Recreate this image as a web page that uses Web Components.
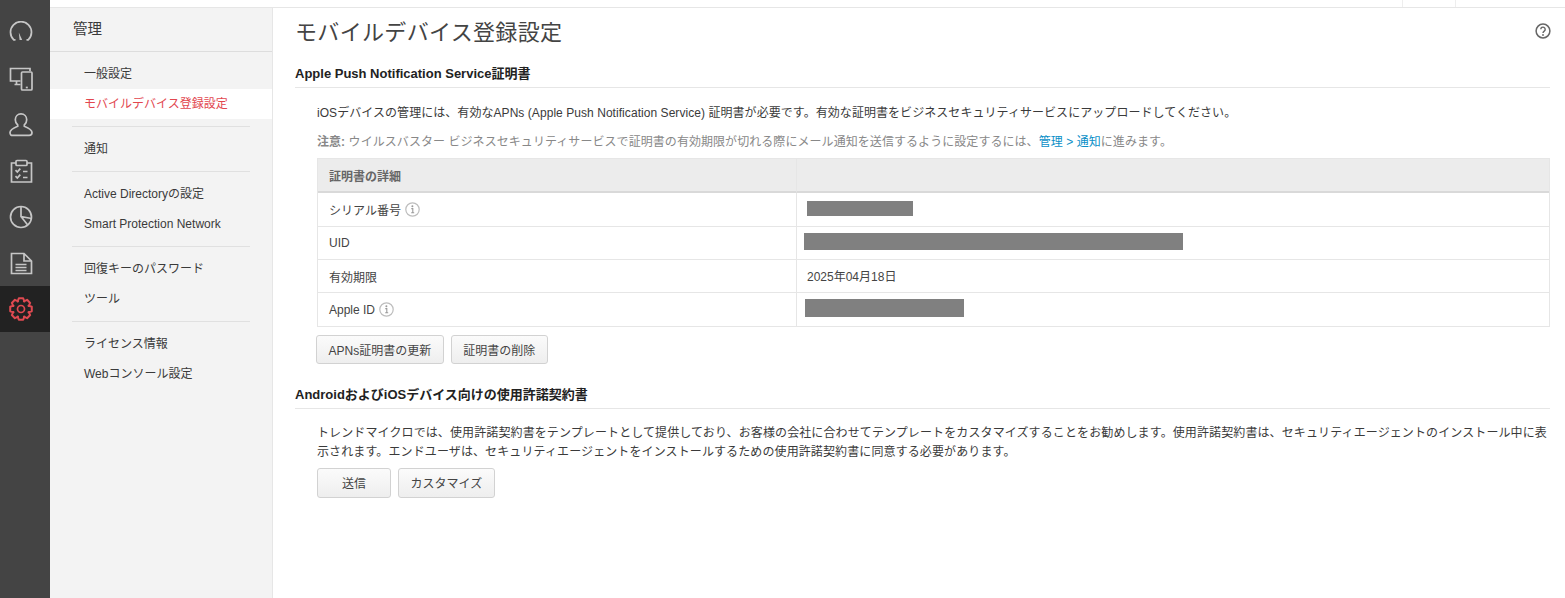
<!DOCTYPE html>
<html lang="ja">
<head>
<meta charset="utf-8">
<title>モバイルデバイス登録設定</title>
<style>
  html, body { margin: 0; height: 100%; background: #fff; }
  body { font: 12px "Liberation Sans", "Noto Sans CJK JP", sans-serif; color: #3a3a3a; overflow: hidden; }
</style>
</head>
<body>
<app-shell>
  <side-rail slot="rail"></side-rail>
  <side-menu slot="menu"></side-menu>
  <settings-page slot="page"></settings-page>
</app-shell>

<script>
class AppShell extends HTMLElement {
    connectedCallback() {
        this.attachShadow({ mode: 'open' });
        this.shadowRoot.innerHTML = `
            <style>
                :host { display: grid; grid-template-columns: 50px 223px 1fr; grid-template-rows: 8px 590px; height: 598px; }
                .top { grid-column: 2 / 4; grid-row: 1; border-bottom: 1px solid #e6e6e6; display: flex; justify-content: flex-end; box-sizing: border-box; }
                .top i { width: 52px; border-left: 1px solid #eeeeee; }
                .top i:last-child { width: 109px; }
                ::slotted([slot=rail]) { grid-column: 1; grid-row: 1 / 3; }
                ::slotted([slot=menu]) { grid-column: 2; grid-row: 2; }
                ::slotted([slot=page]) { grid-column: 3; grid-row: 2; }
            </style>
            <div class="top"><i></i><i></i></div>
            <slot name="rail"></slot>
            <slot name="menu"></slot>
            <slot name="page"></slot>
        `;
    }
}

// eight rounded teeth around the centre of a 24 box
function gearPath() {
    let d = '';
    for (let i = 0; i < 8; i++) {
        const a = i * Math.PI / 4;
        const pts = [[-0.42, 8.2], [-0.2, 11], [0.2, 11], [0.42, 8.2]];
        pts.forEach(([o, r], j) => {
            const x = 12 + r * Math.sin(a + o);
            const y = 12 - r * Math.cos(a + o);
            d += (i === 0 && j === 0 ? 'M' : 'L') + x.toFixed(2) + ' ' + y.toFixed(2);
        });
    }
    return d + 'Z';
}

const railIcons = [
    // gauge
    '<path d="M6.500 18.800H4.800A10.500 10.500 0 1 1 19.200 18.800H17.500"/><path d="M9.800 11.500l3.400 7.500h-2.600z" fill="currentColor" stroke="none"/>',
    // devices
    '<path d="M21 4V1.500H1.500V14H11.500M5.500 17.500h6M7.500 14v3.500"/><rect x="12.500" y="5" width="10.500" height="18" rx="1"/><path d="M16.800 20.500h2"/>',
    // user
    '<path d="M8.700 12C6.800 10.500 6.300 8.800 6.300 6.800 6.300 3.300 8.800.9 12 .9s5.700 2.400 5.700 5.900c0 2-.5 3.700-2.400 5.200v1.200c3.800 1.500 7.700 3.500 7.700 6.300 0 2-1 2.900-2.800 2.900H3.800C2 22.500 1 21.600 1 19.600c0-2.800 3.900-4.800 7.700-6.300z"/>',
    // clipboard
    '<path d="M7 4H2.500v19h20V4H18"/><rect x="7" y="1.500" width="11" height="5" rx="1"/><path d="M6.500 11.200l1.800 1.800 3-3.400M6.500 17.200l1.800 1.800 3-3.400M14 12.500h4.500M14 18.500h4.500"/>',
    // pie
    '<circle cx="12" cy="12" r="10.500"/><path d="M12 1.500V11.500L22.500 13.500M12 11.500L18.700 20"/>',
    // document
    '<path d="M2.500 2.500H15L22.500 10V22.500H2.500zM15 2.500V10H22.500"/><path d="M6.500 13.500h11M6.500 16.500h11M6.500 19.500h11" stroke-width="1.500"/>',
    // gear
    `<path d="${gearPath()}" stroke-linejoin="round" stroke-width="2"/><circle cx="12" cy="12" r="3.500"/>`
];

class SideRail extends HTMLElement {
    connectedCallback() {
        this.attachShadow({ mode: 'open' });
        const items = railIcons.map((p, i) => `
            <a class="${i === 6 ? 'active' : ''}">
                <svg viewBox="0 0 24 24" width="24" height="24" fill="none" stroke-width="1.700">${p}</svg>
            </a>`).join('');
        this.shadowRoot.innerHTML = `
            <style>
                :host { display: block; background: #444444; padding-top: 10px; box-sizing: border-box; }
                a { display: flex; align-items: center; height: 46px; padding-left: 9px; stroke: #c6c6c6; color: #c6c6c6; }
                a.active { background: #222222; stroke: #df4a51; color: #df4a51; }
            </style>
            ${items}
        `;
    }
}

class SideMenu extends HTMLElement {
    connectedCallback() {
        this.attachShadow({ mode: 'open' });
        const groups = [
            ['一般設定', '*モバイルデバイス登録設定'],
            ['通知'],
            ['Active Directoryの設定', 'Smart Protection Network'],
            ['回復キーのパスワード', 'ツール'],
            ['ライセンス情報', 'Webコンソール設定']
        ];
        const html = groups.map(g => '<div class="group">' + g.map(t =>
            t[0] === '*' ? `<a class="active">${t.slice(1)}</a>` : `<a>${t}</a>`
        ).join('') + '</div>').join('');
        this.shadowRoot.innerHTML = `
            <style>
                :host { display: block; background: #f3f3f3; border-right: 1px solid #e6e6e6; box-sizing: border-box; }
                h2 { margin: 0; height: 43px; line-height: 43px; padding-left: 23px; font-size: 14.500px; font-weight: normal; color: #3a3a3a; border-bottom: 1px solid #dddddd; }
                .group { padding: 8px 0 7px; position: relative; }
                .group:first-of-type { padding-top: 7px; }
                .group + .group::before { content: ''; position: absolute; top: 0; left: 22px; right: 22px; height: 1px; background: #e0e0e0; }
                a { display: block; height: 30px; line-height: 30px; padding-left: 34px; color: #3a3a3a; }
                a.active { background: #fff; color: #e2474f; }
            </style>
            <h2>管理</h2>
            ${html}
        `;
    }
}

class PushButton extends HTMLElement {
    connectedCallback() {
        this.attachShadow({ mode: 'open' });
        this.shadowRoot.innerHTML = `
            <style>
                :host { display: inline-flex; align-items: center; justify-content: center; box-sizing: border-box; height: var(--h, 29px); padding: 0 var(--px, 11.500px) 1px; border: 1px solid #d2d2d2; border-radius: 3px; background: linear-gradient(#fbfbfb, #eeeeee); color: #444; }
            </style>
            <slot></slot>
        `;
    }
}

class InfoDot extends HTMLElement {
    connectedCallback() {
        this.attachShadow({ mode: 'open' });
        this.shadowRoot.innerHTML = `
            <style>
                :host { display: inline-block; margin-left: 1px; width: 15px; height: 15px; }
                svg { display: block; }
            </style>
            <svg viewBox="0 0 15 15" width="15" height="15" fill="none">
                <circle cx="7.500" cy="7.500" r="6.700" stroke="#bdbdbd" stroke-width="1.200"/>
                <path d="M6.300 6.600h1.500v4M6.200 10.800h3" stroke="#9a9a9a" stroke-width="1.100"/>
                <circle cx="7.400" cy="4.300" r="1" fill="#9a9a9a"/>
            </svg>
        `;
    }
}

class RedactBar extends HTMLElement {
    connectedCallback() {
        this.attachShadow({ mode: 'open' });
        this.shadowRoot.innerHTML = `
            <style>
                :host { display: block; background: #808080; }
            </style>
        `;
    }
}

class SectionBlock extends HTMLElement {
    connectedCallback() {
        this.attachShadow({ mode: 'open' });
        this.shadowRoot.innerHTML = `
            <style>
                :host { display: block; }
                h3 { margin: 0; padding-bottom: 6px; font-size: 13px; line-height: 15px; font-weight: bold; color: #222; border-bottom: 1px solid #e6e6e6; }
                .body { padding-left: 22px; }
            </style>
            <h3>${this.getAttribute('heading')}</h3>
            <div class="body"><slot></slot></div>
        `;
    }
}

class CertTable extends HTMLElement {
    connectedCallback() {
        this.attachShadow({ mode: 'open' });
        this.shadowRoot.innerHTML = `
            <style>
                :host { display: grid; grid-template-columns: 479px 1fr; grid-template-rows: 34px 34px 33px 33px 33px; border: 1px solid #e6e6e6; box-sizing: border-box; color: #444; }
                ::slotted(*) { display: flex; align-items: center; box-sizing: border-box; border-bottom: 1px solid #e6e6e6; padding-left: 11px; }
                ::slotted(:nth-child(odd)) { border-right: 1px solid #e6e6e6; }
                ::slotted(:nth-child(even)) { padding-left: 10px; }
                ::slotted(.head) { background: #ececec; border-bottom: 2px solid #d9d9d9; font-weight: bold; color: #666; }
                ::slotted(.last) { border-bottom: 0; }
            </style>
            <slot></slot>
        `;
    }
}

class SettingsPage extends HTMLElement {
    connectedCallback() {
        this.attachShadow({ mode: 'open' });
        this.shadowRoot.innerHTML = `
            <style>
                :host { display: block; padding: 0 15px 0 22px; position: relative; }
                h1 { margin: 0; height: 58px; line-height: 50px; font-size: 22px; font-weight: normal; color: #444; letter-spacing: .33px; }
                .help { position: absolute; top: 15px; right: 14px; }
                p { margin: 0; }
                .p1 { padding-top: 17px; line-height: 17px; letter-spacing: .055px; }
                .p2 { padding-top: 12px; line-height: 17px; color: #888; letter-spacing: .06px; }
                .p2 b { color: #888; }
                .p2 span { color: #0a8fc7; }
                cert-table { margin-top: 7px; }
                .btns { display: flex; gap: 7px; }
                .b1 { margin-top: 8px; margin-left: -1px; }
                .second { margin-top: 23px; }
                .p3 { padding-top: 15px; line-height: 19px; letter-spacing: .11px; }
                .b2 { margin-top: 6px; }
                .b2 push-button { --h: 30px; }
                .cell-date { padding-bottom: 2px; }
            </style>
            <h1>モバイルデバイス登録設定</h1>
            <svg class="help" viewBox="0 0 16 16" width="16" height="16" fill="none">
                <circle cx="8" cy="8" r="6.900" stroke="#666" stroke-width="1.500"/>
                <path d="M5.800 6.300a2.200 2.200 0 1 1 3.600 1.700c-.9.700-1.400 1-1.400 2.100" stroke="#666" stroke-width="1.400"/>
                <circle cx="8" cy="12" r=".9" fill="#666"/>
            </svg>
            <section-block heading="Apple Push Notification Service証明書">
                <p class="p1">iOSデバイスの管理には、有効なAPNs (Apple Push Notification Service) 証明書が必要です。有効な証明書をビジネスセキュリティサービスにアップロードしてください。</p>
                <p class="p2"><b>注意:</b> ウイルスバスター ビジネスセキュリティサービスで証明書の有効期限が切れる際にメール通知を送信するように設定するには、<span>管理 &gt; 通知</span>に進みます。</p>
                <cert-table>
                    <div class="head">証明書の詳細</div><div class="head"></div>
                    <div>シリアル番号&nbsp;<info-dot></info-dot></div><div style="padding-bottom:2px"><redact-bar style="width:106px;height:15px"></redact-bar></div>
                    <div>UID</div><div style="padding-left:7px;padding-bottom:4px"><redact-bar style="width:379px;height:17px"></redact-bar></div>
                    <div>有効期限</div><div class="cell-date" style="padding-bottom:2px">2025年04月18日</div>
                    <div class="last">Apple ID&nbsp;<info-dot></info-dot></div><div class="last" style="padding-left:8px;padding-bottom:4px"><redact-bar style="width:159px;height:18px"></redact-bar></div>
                </cert-table>
                <div class="btns b1"><push-button>APNs証明書の更新</push-button><push-button>証明書の削除</push-button></div>
            </section-block>
            <section-block class="second" heading="AndroidおよびiOSデバイス向けの使用許諾契約書">
                <p class="p3">トレンドマイクロでは、使用許諾契約書をテンプレートとして提供しており、お客様の会社に合わせてテンプレートをカスタマイズすることをお勧めします。使用許諾契約書は、セキュリティエージェントのインストール中に表示されます。エンドユーザは、セキュリティエージェントをインストールするための使用許諾契約書に同意する必要があります。</p>
                <div class="btns b2"><push-button style="--px:24px">送信</push-button><push-button>カスタマイズ</push-button></div>
            </section-block>
        `;
    }
}

customElements.define('app-shell', AppShell);
customElements.define('side-rail', SideRail);
customElements.define('side-menu', SideMenu);
customElements.define('push-button', PushButton);
customElements.define('info-dot', InfoDot);
customElements.define('redact-bar', RedactBar);
customElements.define('section-block', SectionBlock);
customElements.define('cert-table', CertTable);
customElements.define('settings-page', SettingsPage);
</script>
</body>
</html>
